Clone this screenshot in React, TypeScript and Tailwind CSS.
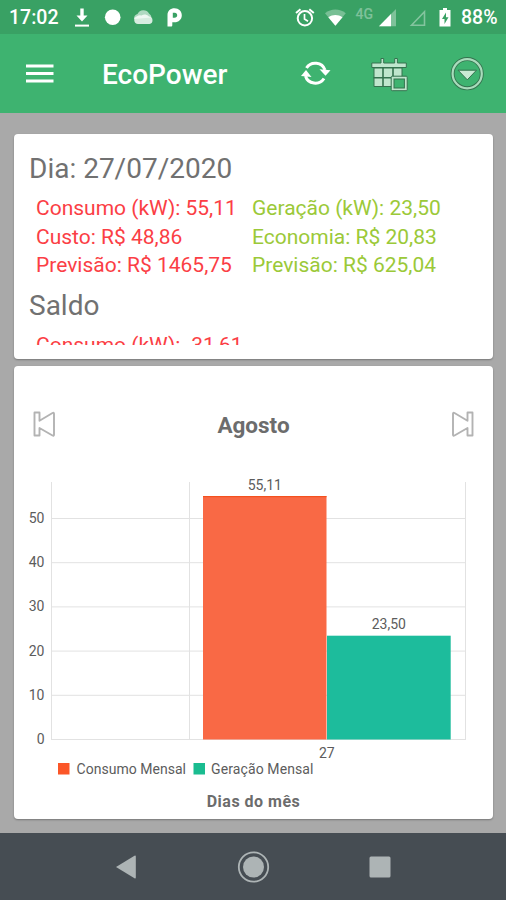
import { ReactNode } from "react";

const consumption = [
  "Consumo (kW): 55,11",
  "Custo: R$ 48,86",
  "Previsão: R$ 1465,75"
];
const generation = [
  "Geração (kW): 23,50",
  "Economia: R$ 20,83",
  "Previsão: R$ 625,04"
];

const ticks = [0, 10, 20, 30, 40, 50];

function StatusBar() {
  return (
    <div className="flex h-[34px] items-center bg-[#39a164] pr-2 pl-[9px] text-white">
      <span className="w-[66px] pt-0.5 text-[19.500px] leading-none font-medium">
        17:02
      </span>
      <svg width="110" height="34" viewBox="75 0 110 34" fill="#fff">
        <path d="M80.300 8.500h3.400v7h3.800L82 21.500l-5.500-6h3.800z" />
        <rect x="75" y="24.600" width="14" height="2" />
        <circle cx="112.700" cy="17.300" r="7.800" />
        <path
          d="M134 19a5 5 0 0 1 3.500-5 6.500 6.500 0 0 1 11.500-.5 5 5 0 0 1 2.500 4z"
          opacity=".6"
        />
        <path
          d="M138 24a4 4 0 0 1-1-7.800 5 5 0 0 1 4.500-.7 5.500 5.500 0 0 1 7.500 1 3.800 3.800 0 0 1 .5 7.500z"
          opacity=".8"
        />
        <path
          fillRule="evenodd"
          d="M167.500 15c0-4.200 3-6.700 7-6.700 4.300 0 7.300 2.900 7.300 6.900 0 4.300-3.200 7-7.300 7h-2.200v3c0 .8-.5 1.400-1.300 1.400h-3.500zm5.300-2.200v4.900h1.800c1.600 0 2.600-1 2.600-2.500s-1-2.400-2.300-2.400z"
        />
      </svg>
      <div className="ml-auto flex items-center">
        <svg width="158" height="34" viewBox="294 0 158 34" fill="none">
          <g stroke="#fff" strokeWidth="2">
            <circle cx="304.900" cy="18.300" r="7.200" />
            <path d="M304.500 14v5l3.500 2.200" strokeWidth="1.700" />
            <path d="M296 13l4.500-3.800M313.800 13l-4.500-3.800" />
          </g>
          <path
            d="M325 13.300c6.200-5 14.600-5 20.800 0l-10.400 12.500z"
            fill="#fff"
            opacity=".32"
          />
          <path d="M328.300 17.300c4.600-3 9.600-3 14.200 0l-7.100 8.500z" fill="#fff" />
          <text
            x="355.500"
            y="19"
            fill="#fff"
            opacity=".35"
            fontSize="14"
            fontWeight="500"
          >
            4G
          </text>
          <path d="M379 26.300L396 9v17.300z" fill="#fff" opacity=".35" />
          <path d="M379 26.300L391 14v12.300z" fill="#fff" />
          <path
            d="M411.500 25.300l13-13.500v13.500z"
            stroke="#fff"
            strokeWidth="1.600"
            opacity=".38"
          />
          <path d="M443 8h4v2h3.500v16.500h-11V10h3.500z" fill="#fff" />
          <path d="M446 12.500l-4 6.500h2.500v5l4-6.800h-2.500z" fill="#39a164" />
        </svg>
        <span className="ml-[9px] w-[37px] pt-0.5 text-[19.500px] leading-none font-medium whitespace-nowrap">
          88%
        </span>
      </div>
    </div>
  );
}

function AppBar() {
  return (
    <header className="flex h-[79px] items-center bg-[#3eb370] pr-[21px] pl-[26px] text-white">
      <svg width="28" height="20" viewBox="0 0 28 20" fill="#fff">
        <rect y="0.500" width="27.500" height="3" />
        <rect y="8" width="27.500" height="3" />
        <rect y="15.500" width="27.500" height="3" />
      </svg>
      <h1 className="ml-12 pt-0.5 text-[28px] leading-none font-medium">
        EcoPower
      </h1>
      <div className="ml-auto flex items-center">
        <svg width="184" height="40" viewBox="301 54 184 40" fill="none">
          <g stroke="#fff" strokeWidth="3">
            <path d="M306.500 68a10.200 9.800 0 0 1 18.500 2" />
            <path d="M324 78.500a10.200 9.800 0 0 1-18.500-2.500" />
          </g>
          <path d="M319.500 69.200l11 1-5 5.500z" fill="#fff" />
          <path d="M301 76l10.500 1-5.500-7z" fill="#fff" />
          <g stroke="#35734f" strokeWidth="1" fill="#bfe6cd">
            <path d="M374 68h28v18.500h-28z" />
            <path
              d="M373.500 77.800h28M383 68v18.500M393 68v18.500"
              strokeWidth="1.600"
            />
            <path d="M381 58.500h2.700V63h11v-4.500h2.700V63h8.900v4.500h-34.500V63h9.200z" />
            <rect x="391.200" y="76.200" width="16" height="14.500" rx="1" />
            <rect x="394" y="79" width="10.400" height="9" fill="#3eb370" />
          </g>
          <circle
            cx="467.200"
            cy="73.700"
            r="14.600"
            stroke="#35734f"
            strokeWidth="4"
          />
          <circle
            cx="467.200"
            cy="73.700"
            r="14.600"
            stroke="#a9dcbc"
            strokeWidth="2.200"
          />
          <path
            d="M458 70.200h18.500l-9.200 9.600z"
            fill="#c8ebd4"
            stroke="#35734f"
            strokeWidth="1"
          />
        </svg>
      </div>
    </header>
  );
}

function Card({
  className,
  children
}: {
  className: string;
  children: ReactNode;
}) {
  return (
    <section
      className={`rounded-[4px] bg-white shadow-[0_1px_2px_rgba(0,0,0,0.3)] ${className}`}
    >
      {children}
    </section>
  );
}

function Summary() {
  return (
    <Card className="h-[225px] px-[15px] pt-[15px] pb-[14px]">
      <div className="h-[196px] overflow-hidden">
        <h2 className="pt-px text-[28px] leading-[38px] text-[#717171]">
          Dia: 27/07/2020
        </h2>
        <div className="mt-[6px] flex pl-[7px] text-[21px] leading-[28.500px]">
          <ul className="w-[216px] text-[#fb3e45]">
            {consumption.map((line) => (
              <li key={line}>{line}</li>
            ))}
          </ul>
          <ul className="text-[#9bc938]">
            {generation.map((line) => (
              <li key={line}>{line}</li>
            ))}
          </ul>
        </div>
        <h2 className="mt-[7px] text-[28px] leading-[38px] text-[#717171]">
          Saldo
        </h2>
        <p className="mt-[6px] pl-[7px] text-[21px] leading-[28.500px] text-[#fb3e45]">
          Consumo (kW): -31,61
        </p>
      </div>
    </Card>
  );
}

function SkipIcon({ className }: { className?: string }) {
  return (
    <svg
      width="24"
      height="28"
      viewBox="0 0 24 28"
      fill="#fff"
      stroke="#b3b3b3"
      strokeWidth="1.900"
      strokeLinejoin="round"
      className={className}
    >
      <path d="M2.500 2.500h5v8.200L20.500 3q1.500-.7 1.500.8v20.900q0 1.500-1.500.8L7.500 18v7.500h-5z" />
    </svg>
  );
}

function Chart() {
  const y = (value: number) => 257.5 - value * 4.42;

  return (
    <svg
      width="479"
      height="302"
      viewBox="14 0 479 302"
      className="block overflow-visible"
      fontSize="14"
      fill="#5c5c5c"
    >
      <g stroke="#e2e2e2">
        {ticks.map((t) => (
          <line key={t} x1="51" x2="466" y1={y(t)} y2={y(t)} />
        ))}
        <line x1="51.500" x2="51.500" y1="0" y2="258" />
        <line x1="189.500" x2="189.500" y1="0" y2="258" />
        <line x1="465.500" x2="465.500" y1="0" y2="258" />
      </g>
      {ticks.map((t) => (
        <text key={t} x="44.500" y={y(t) + 4.5} textAnchor="end">
          {t}
        </text>
      ))}
      <rect x="203" y="14" width="123.500" height="243.500" fill="#f96945" />
      <rect x="203" y="14" width="123.500" height="1.200" fill="#f4511e" />
      <rect x="327" y="153.700" width="123.700" height="103.800" fill="#1dbc9c" />
      <text x="264.800" y="7.500" textAnchor="middle">
        55,11
      </text>
      <text x="388.800" y="147" textAnchor="middle">
        23,50
      </text>
      <text x="326.800" y="276" textAnchor="middle">
        27
      </text>
      <rect x="58" y="281" width="11.500" height="11.500" fill="#fb5628" />
      <text x="76.500" y="291.500" textLength="109.500">
        Consumo Mensal
      </text>
      <rect x="193.500" y="281" width="11.500" height="11.500" fill="#1abc90" />
      <text x="211" y="291.500" textLength="102.500">
        Geração Mensal
      </text>
    </svg>
  );
}

function MonthChart() {
  return (
    <Card className="mt-[7px] h-[453px] pt-[44px]">
      <div className="flex h-7 items-center justify-between px-[18px]">
        <SkipIcon />
        <h2 className="pt-0.5 text-[22.500px] leading-none font-bold text-[#6c6c6c]">
          Agosto
        </h2>
        <SkipIcon className="-scale-x-100" />
      </div>
      <div className="mt-11">
        <Chart />
      </div>
      <p className="mt-2 text-center text-[16px] leading-5 font-bold tracking-[0.5px] text-[#6c6c6c]">
        Dias do mês
      </p>
    </Card>
  );
}

function NavigationBar() {
  return (
    <nav className="flex h-[67px] items-center justify-center bg-[#464d53]">
      <svg width="276" height="36" viewBox="115 848 276 36" fill="#adb4b5">
        <path d="M116 866l18.500-11.200q1.300-.6 1.300.8v20.800q0 1.400-1.300.8z" />
        <circle
          cx="253.500"
          cy="866"
          r="14.700"
          fill="none"
          stroke="#adb4b5"
          strokeWidth="1.800"
        />
        <circle cx="253.500" cy="866" r="10.500" />
        <rect x="369.500" y="855.500" width="21" height="21" rx="1.500" />
      </svg>
    </nav>
  );
}

export default function App() {
  return (
    <div className="flex h-[900px] w-[506px] flex-col overflow-hidden bg-[#a9a9a9] font-[Roboto,sans-serif]">
      <StatusBar />
      <AppBar />
      <main className="flex-1 pt-[21px] pr-[13px] pl-[14px]">
        <Summary />
        <MonthChart />
      </main>
      <NavigationBar />
    </div>
  );
}
